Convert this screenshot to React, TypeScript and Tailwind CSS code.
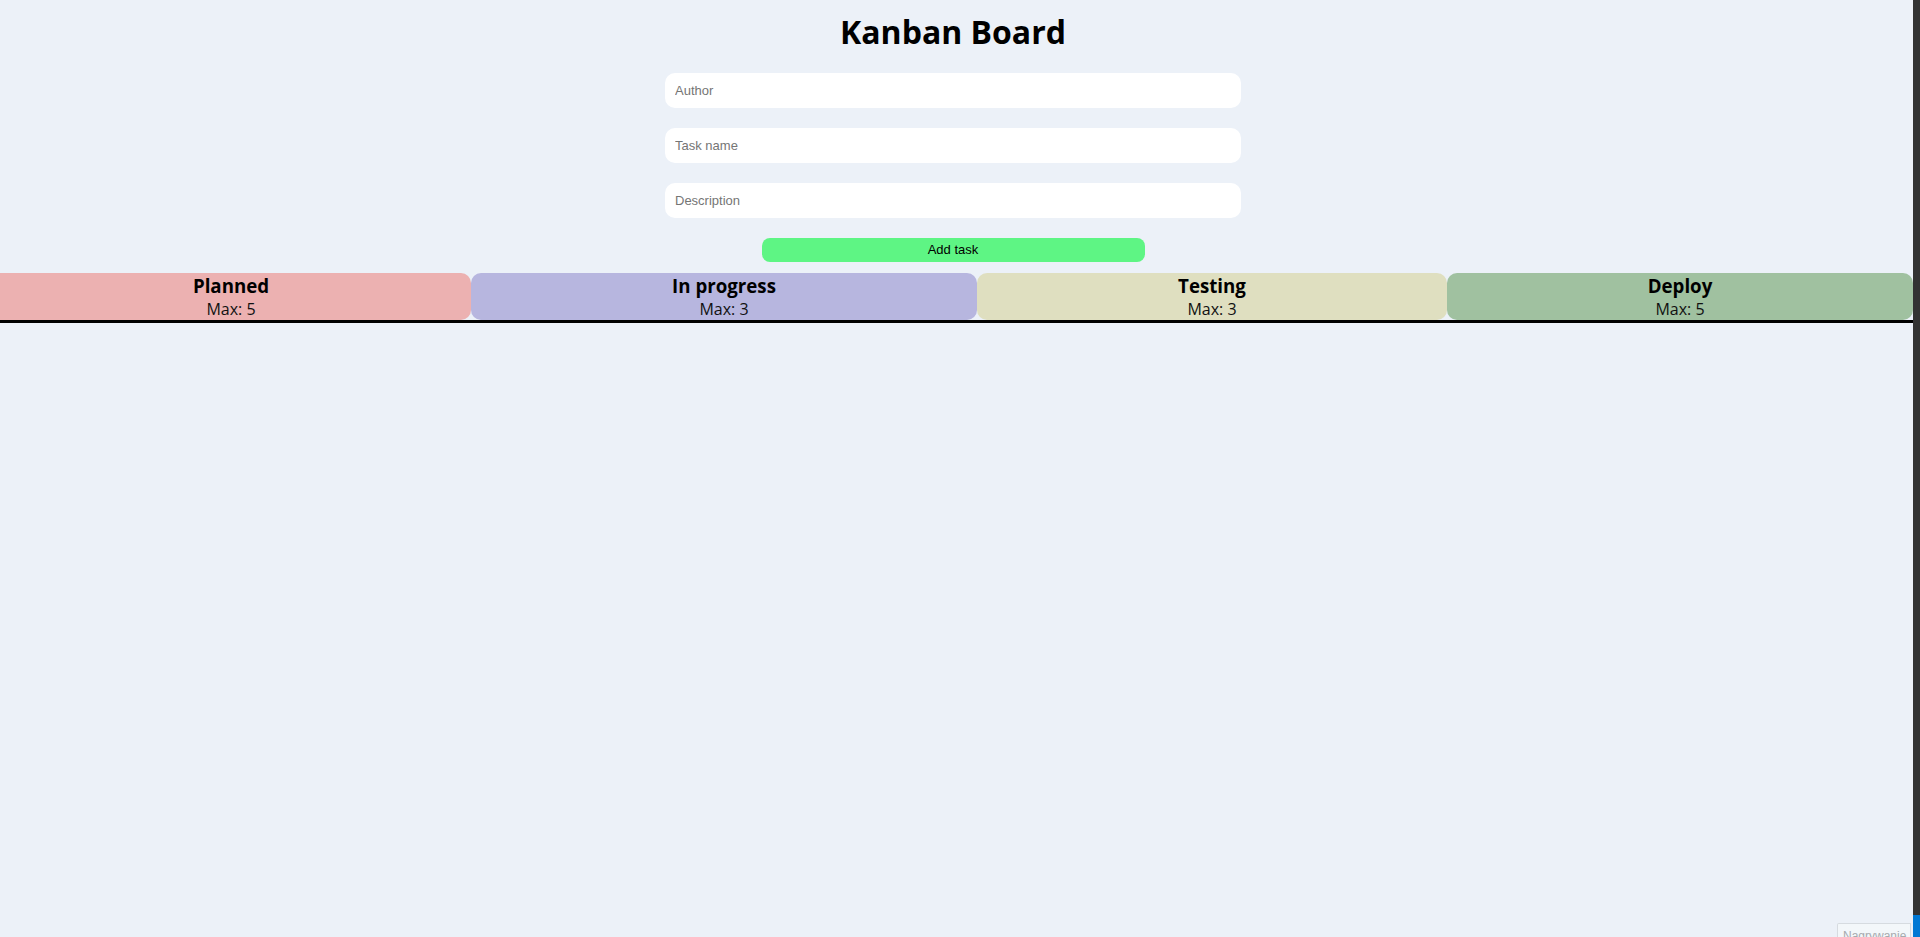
import React from "react";

const columns = [
  { name: "Planned", max: 5, width: "-ml-[9px] w-[480px]", bg: "bg-[#ecb1b1]" },
  { name: "In progress", max: 3, width: "w-[506px]", bg: "bg-[#b7b6df]" },
  { name: "Testing", max: 3, width: "w-[470px]", bg: "bg-[#dfdfc0]" },
  { name: "Deploy", max: 5, width: "w-[466px]", bg: "bg-[#a0c1a0]" },
];

const Field = ({ placeholder }: { placeholder: string }) => (
  <input
    type="text"
    placeholder={placeholder}
    className="h-[35px] w-full rounded-[10px] bg-white px-[10px] font-['Liberation_Sans',Arial,sans-serif] text-[13px] text-black outline-none placeholder:text-[#757575]"
  />
);

export default function App() {
  return (
    <div className="relative flex h-[937px] w-full overflow-hidden bg-[#ecf1f8] font-['Open_Sans',sans-serif]">
      <div className="flex w-[1913px] flex-col overflow-hidden">
        {/* Form */}
        <div className="flex flex-col items-center pr-[7px]">
          <h1 className="mt-[12px] text-[32px] font-bold leading-[40px] text-black">
            Kanban Board
          </h1>
          <div className="mt-[21px] flex w-[576px] flex-col gap-[20px]">
            <Field placeholder="Author" />
            <Field placeholder="Task name" />
            <Field placeholder="Description" />
          </div>
          <button className="mt-[20px] h-[24px] w-[383px] rounded-[8px] bg-[#5ef584] font-['Liberation_Sans',Arial,sans-serif] text-[13px] text-black">
            Add task
          </button>
        </div>

        {/* Columns */}
        <div className="mt-[11px] flex border-b-[3px] border-black">
          {columns.map((c) => (
            <div
              key={c.name}
              className={`${c.width} ${c.bg} flex h-[47px] shrink-0 flex-col items-center rounded-[10px] pt-[1px]`}
            >
              <span className="text-[18.7px] font-bold leading-[24px] text-black">
                {c.name}
              </span>
              <span className="text-[16px] leading-[22px] text-[#111]">
                Max: {c.max}
              </span>
            </div>
          ))}
        </div>
      </div>

      {/* Side strip */}
      <div className="w-[7px] bg-[#333333]" />

      {/* Recording indicator */}
      <div className="absolute bottom-0 right-[9px] h-[14px] w-[74px] overflow-hidden rounded-tl-[2px] border border-b-0 border-[#d6dbe0] bg-[#f3f7fa] pl-[5px] pt-[5px] font-['Liberation_Sans',Arial,sans-serif] text-[12px] leading-[14px] text-[#a6aaae]">
        Nagrywanie
      </div>
      <div className="absolute bottom-0 right-0 h-[22px] w-[7px] bg-[#0078d4]" />
    </div>
  );
}
